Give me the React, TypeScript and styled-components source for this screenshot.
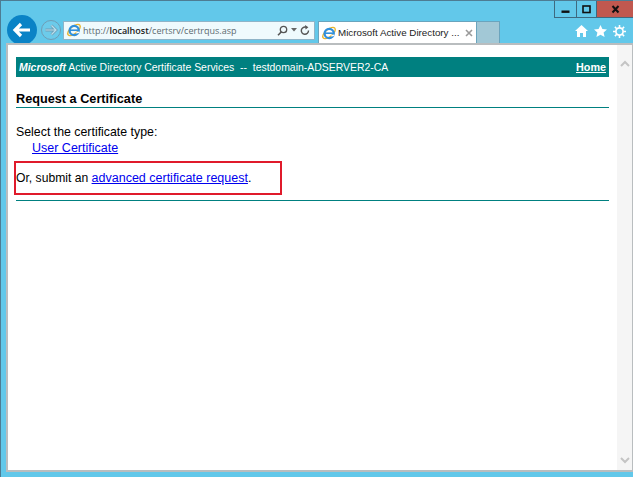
import React from 'react';
import styled, { createGlobalStyle } from 'styled-components';

const GlobalStyle = createGlobalStyle`
  html, body {
    margin: 0;
    padding: 0;
    overflow: hidden;
  }
`;

const Frame = styled.div`
  width: 633px;
  height: 477px;
  box-sizing: border-box;
  background: #62c8ea;
  border-top: 1px solid #4d7c93;
  border-left: 1px solid #4d7c93;
  display: flex;
  flex-direction: column;
  position: relative;
  font-family: "Liberation Sans", Arial, sans-serif;
`;

const WindowButtons = styled.div`
  position: absolute;
  top: 0;
  right: 0;
  height: 17px;
  display: flex;
`;

const WinButton = styled.div<{ $w: number; $bg: string }>`
  width: ${p => p.$w}px;
  height: 17px;
  box-sizing: border-box;
  background: ${p => p.$bg};
  border-left: 1px solid #3e6a80;
  border-bottom: 1px solid #3e6a80;
  display: flex;
  align-items: center;
  justify-content: center;
`;

const Toolbar = styled.div`
  height: 42px;
  box-sizing: border-box;
  padding: 16px 0 0 6px;
  display: flex;
  align-items: center;
  flex: none;
`;

const BackButton = styled.div`
  width: 30px;
  height: 30px;
  border-radius: 50%;
  background: #0a83c6;
  display: flex;
  align-items: center;
  justify-content: center;
  flex: none;
`;

const ForwardButton = styled.div`
  width: 20px;
  height: 20px;
  box-sizing: border-box;
  margin-left: 4px;
  border-radius: 50%;
  border: 1px solid #6f9db5;
  background: #6ccbea;
  display: flex;
  align-items: center;
  justify-content: center;
  flex: none;
`;

const AddressBar = styled.div`
  width: 252px;
  height: 19px;
  box-sizing: border-box;
  margin-left: 2px;
  background: #effafd;
  border: 1px solid #8fb4c8;
  display: flex;
  align-items: center;
  padding: 0 4px 0 2px;
  flex: none;
`;

const Url = styled.span`
  margin-left: 1px;
  flex: 1;
  font-family: "Open Sans", "Liberation Sans", sans-serif;
  font-size: 9px;
  color: #5c6a70;
  white-space: nowrap;
`;

const UrlHost = styled.span`
  color: #222;
  font-weight: 600;
`;

const AddressTools = styled.div`
  display: flex;
  align-items: center;
  gap: 3px;
`;

const Tab = styled.div`
  width: 159px;
  height: 22px;
  box-sizing: border-box;
  margin-left: 3px;
  align-self: flex-end;
  background: #fff;
  border: 1px solid #6aa4bd;
  border-bottom: none;
  display: flex;
  align-items: center;
  padding: 0 3px 0 2px;
  flex: none;
`;

const TabTitle = styled.span`
  margin-left: 1px;
  flex: 1;
  font-size: 9.8px;
  color: #222;
  white-space: nowrap;
`;

const NewTab = styled.div`
  width: 23px;
  height: 22px;
  box-sizing: border-box;
  align-self: flex-end;
  background: #a2c8d6;
  border: 1px solid #6aa4bd;
  border-left: none;
  border-bottom: none;
  flex: none;
`;

const ToolIcons = styled.div`
  margin: 2px 7px 0 auto;
  display: flex;
  align-items: center;
  gap: 6px;
`;

const Viewport = styled.div`
  flex: 1;
  margin: 0 0 5px 5px;
  background: #fff;
  border: 1px solid #b9bdbf;
  border-width: 2px 1px 2px 2px;
  display: flex;
  min-height: 0;
`;

const Page = styled.div`
  flex: 1;
  padding: 12px 8px 0 8px;
  color: #000;
`;

const Banner = styled.div`
  height: 20px;
  background: #008080;
  color: #fff;
  display: flex;
  align-items: center;
  justify-content: space-between;
  padding: 0 3px;
  font-size: 10.45px;
`;

const BrandText = styled.span`
  white-space: pre;
`;

const Brand = styled.b`
  font-style: italic;
`;

const HomeLink = styled.a`
  color: #fff;
  font-weight: 700;
  font-size: 10.8px;
  text-decoration: underline;
`;

const Heading = styled.h1`
  margin: 14px 0 0;
  font-size: 12.7px;
  line-height: 16px;
  font-weight: 700;
  border-bottom: 1px solid #008080;
`;

const Text = styled.div`
  margin-top: 16px;
  font-size: 12.35px;
  line-height: 16px;
`;

const Indented = styled.div`
  margin-left: 16px;
  font-size: 12.5px;
  line-height: 16px;
`;

const Link = styled.a`
  color: #0000ee;
  text-decoration: underline;
`;

const Highlighted = styled.div`
  margin: 5px 0 0 -2px;
  width: 268px;
  height: 34px;
  box-sizing: border-box;
  border: 2px solid #e01a2b;
  display: flex;
  align-items: center;
  font-size: 12.5px;
  white-space: pre;
`;

const Prefix = styled.span`
  font-size: 12.15px;
`;

const Rule = styled.div`
  margin-top: 5px;
  height: 1px;
  background: #008080;
`;

const Scrollbar = styled.div`
  width: 15px;
  background: #f5f5f5;
  flex: none;
  display: flex;
  flex-direction: column;
  justify-content: space-between;
  align-items: center;
  padding: 15px 0 6px;
`;

const Chevron = ({ up }: { up?: boolean }) => (
  <svg width="10" height="7" viewBox="0 0 10 7">
    <path d={up ? 'M1 6l4-4 4 4' : 'M1 1l4 4 4-4'} fill="none" stroke="#c4c4c4" strokeWidth="2" />
  </svg>
);

const IeLogo = () => (
  <svg width="16" height="16" viewBox="0 0 16 16">
    <ellipse cx="8" cy="8" rx="7.6" ry="3.6" transform="rotate(-40 8 8)" fill="none" stroke="#e8b530" strokeWidth="1.4" />
    <circle cx="8.2" cy="8.5" r="4.6" fill="none" stroke="#2f8fdc" strokeWidth="2.2" />
    <path d="M4 8.2h8.4" stroke="#2f8fdc" strokeWidth="1.6" />
    <path d="M10.4 10.8l3-.6" stroke="#fff" strokeWidth="1.6" />
  </svg>
);

export default function App() {
  return (
    <>
      <GlobalStyle />
      <Frame>
        <WindowButtons>
          <WinButton $w={22} $bg="#62c8ea">
            <svg width="9" height="9" viewBox="0 0 9 9"><rect x="0.5" y="5.5" width="8" height="2.4" fill="#111" /></svg>
          </WinButton>
          <WinButton $w={20} $bg="#62c8ea">
            <svg width="9" height="9" viewBox="0 0 9 9"><rect x="1" y="1" width="7" height="6.5" fill="none" stroke="#111" strokeWidth="1.6" /></svg>
          </WinButton>
          <WinButton $w={37} $bg="#c0584f">
            <svg width="9" height="9" viewBox="0 0 9 9"><path d="M1.5 1l6 6.5M7.5 1l-6 6.5" stroke="#111" strokeWidth="2" /></svg>
          </WinButton>
        </WindowButtons>
        <Toolbar>
          <BackButton>
            <svg width="20" height="16" viewBox="0 0 20 16">
              <path d="M9 2L3 8l6 6M3.5 8H18" fill="none" stroke="#fff" strokeWidth="3.2" />
            </svg>
          </BackButton>
          <ForwardButton>
            <svg width="14" height="12" viewBox="0 0 14 12">
              <path d="M7.5 1.5L12 6l-4.5 4.5M11.5 6H1.5" fill="none" stroke="#6f9db5" strokeWidth="2.8" />
              <path d="M7.5 1.5L12 6l-4.5 4.5M11.5 6H1.5" fill="none" stroke="#b8e0ee" strokeWidth="1.2" />
            </svg>
          </ForwardButton>
          <AddressBar>
            <IeLogo />
            <Url>http://<UrlHost>localhost</UrlHost>/certsrv/certrqus.asp</Url>
            <AddressTools>
              <svg width="11" height="11" viewBox="0 0 11 11">
                <circle cx="6.5" cy="4.5" r="3.2" fill="none" stroke="#555" strokeWidth="1.3" />
                <path d="M4.2 7L1 10.2" stroke="#555" strokeWidth="1.6" />
              </svg>
              <svg width="6" height="4" viewBox="0 0 6 4"><path d="M0 0h6L3 3.5z" fill="#666" /></svg>
              <svg width="10" height="11" viewBox="0 0 10 11">
                <path d="M8.5 5.5A3.6 3.6 0 1 1 6 2.2" fill="none" stroke="#555" strokeWidth="1.4" />
                <path d="M5 0l3.4 2.2L5.6 4.6z" fill="#555" />
              </svg>
            </AddressTools>
          </AddressBar>
          <Tab>
            <IeLogo />
            <TabTitle>Microsoft Active Directory ...</TabTitle>
            <svg width="8" height="8" viewBox="0 0 8 8"><path d="M1 1l6 6M7 1L1 7" stroke="#9a9a9a" strokeWidth="1.6" /></svg>
          </Tab>
          <NewTab />
          <ToolIcons>
            <svg width="13" height="12" viewBox="0 0 13 12">
              <path d="M6.5 0L13 6h-2v6H8V8H5v4H2V6H0z" fill="#fff" />
            </svg>
            <svg width="13" height="12" viewBox="0 0 13 12">
              <path d="M6.5 0l1.9 4.1 4.6.5-3.4 3 1 4.4-4.1-2.3L2.4 12l1-4.4L0 4.6l4.6-.5z" fill="#fff" />
            </svg>
            <svg width="13" height="13" viewBox="0 0 13 13">
              <circle cx="6.5" cy="6.5" r="3.6" fill="none" stroke="#fff" strokeWidth="1.7" />
              <path d="M6.5 0v2.6M6.5 10.4V13M0 6.5h2.6M10.4 6.5H13M1.9 1.9l1.8 1.8M9.3 9.3l1.8 1.8M11.1 1.9L9.3 3.7M3.7 9.3l-1.8 1.8" stroke="#fff" strokeWidth="1.6" />
            </svg>
          </ToolIcons>
        </Toolbar>
        <Viewport>
          <Page>
            <Banner>
              <BrandText><Brand>Microsoft</Brand> Active Directory Certificate Services  --  testdomain-ADSERVER2-CA</BrandText>
              <HomeLink>Home</HomeLink>
            </Banner>
            <Heading>Request a Certificate</Heading>
            <Text>Select the certificate type:</Text>
            <Indented><Link>User Certificate</Link></Indented>
            <Highlighted><Prefix>Or, submit an </Prefix><Link>advanced certificate request</Link>.</Highlighted>
            <Rule />
          </Page>
          <Scrollbar>
            <Chevron up />
            <Chevron />
          </Scrollbar>
        </Viewport>
      </Frame>
    </>
  );
}
